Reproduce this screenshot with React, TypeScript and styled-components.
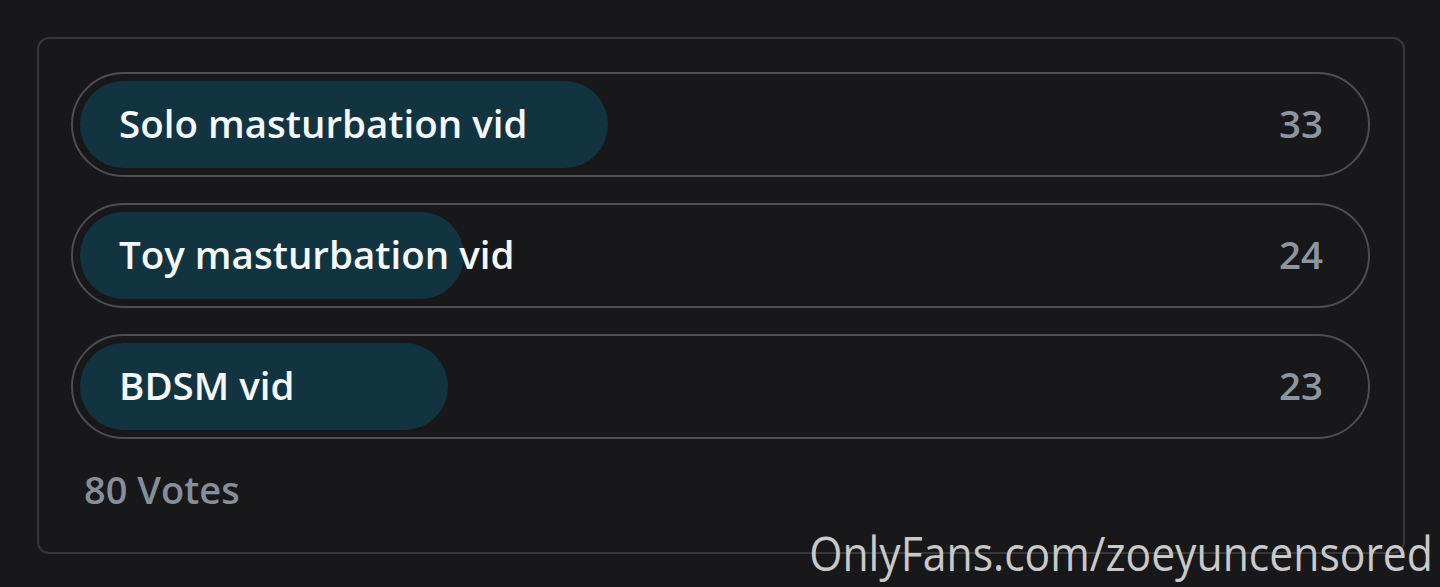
import styled, { createGlobalStyle } from "styled-components";

const GlobalStyle = createGlobalStyle`
    html, body {
        margin: 0;
        padding: 0;
        background-color: #18181a;
    }
    body {
        font-family: "Open Sans", "Noto Sans", sans-serif;
    }
`;

const Page = styled.div`
    position: relative;
    width: 1440px;
    height: 587px;
    padding: 37px 35px 0 37px;
    box-sizing: border-box;
    overflow: hidden;
    background-color: #18181a;
`;

const Card = styled.div`
    border: 2px solid #36373b;
    border-radius: 12px;
    height: 517px;
    box-sizing: border-box;
    padding: 33px 33px 0 32px;
    display: flex;
    flex-direction: column;
    gap: 26px;
`;

const Option = styled.div`
    border: 2px solid #4d4e53;
    border-radius: 54px;
    padding: 7px;
    height: 105px;
    box-sizing: border-box;
`;

const Track = styled.div`
    position: relative;
    height: 87px;
    display: flex;
    align-items: center;
    justify-content: space-between;
    padding: 0 38px 3px 39px;
    box-sizing: border-box;
`;

const Fill = styled.div`
    position: absolute;
    left: 0;
    top: 0;
    bottom: 0;
    border-radius: 44px;
    background-color: #123441;
`;

const Label = styled.span`
    position: relative;
    font-size: 38.5px;
    font-weight: 600;
    color: #f4f6f8;
`;

const Count = styled.span`
    position: relative;
    font-size: 38.5px;
    font-weight: 600;
    color: #8d95a1;
`;

const Votes = styled.div`
    margin-top: -2px;
    padding-left: 13px;
    font-size: 38px;
    font-weight: 600;
    color: #858e9b;
`;

const Watermark = styled.div`
    position: absolute;
    right: 7px;
    bottom: 2px;
    font-size: 47px;
    font-weight: 400;
    color: #c9c9c9;
    transform: scaleX(0.908);
    transform-origin: right center;
`;

const options = [
    { label: "Solo masturbation vid", votes: 33 },
    { label: "Toy masturbation vid", votes: 24 },
    { label: "BDSM vid", votes: 23 },
];

const total = options.reduce((sum, o) => sum + o.votes, 0);

export default function App() {
    return (
        <>
            <GlobalStyle />
            <Page>
                <Card>
                    {options.map((o) => (
                        <Option key={o.label}>
                            <Track>
                                <Fill style={{ width: `${(o.votes / total) * 100}%` }} />
                                <Label>{o.label}</Label>
                                <Count>{o.votes}</Count>
                            </Track>
                        </Option>
                    ))}
                    <Votes>{total} Votes</Votes>
                </Card>
                <Watermark>OnlyFans.com/zoeyuncensored</Watermark>
            </Page>
        </>
    );
}
